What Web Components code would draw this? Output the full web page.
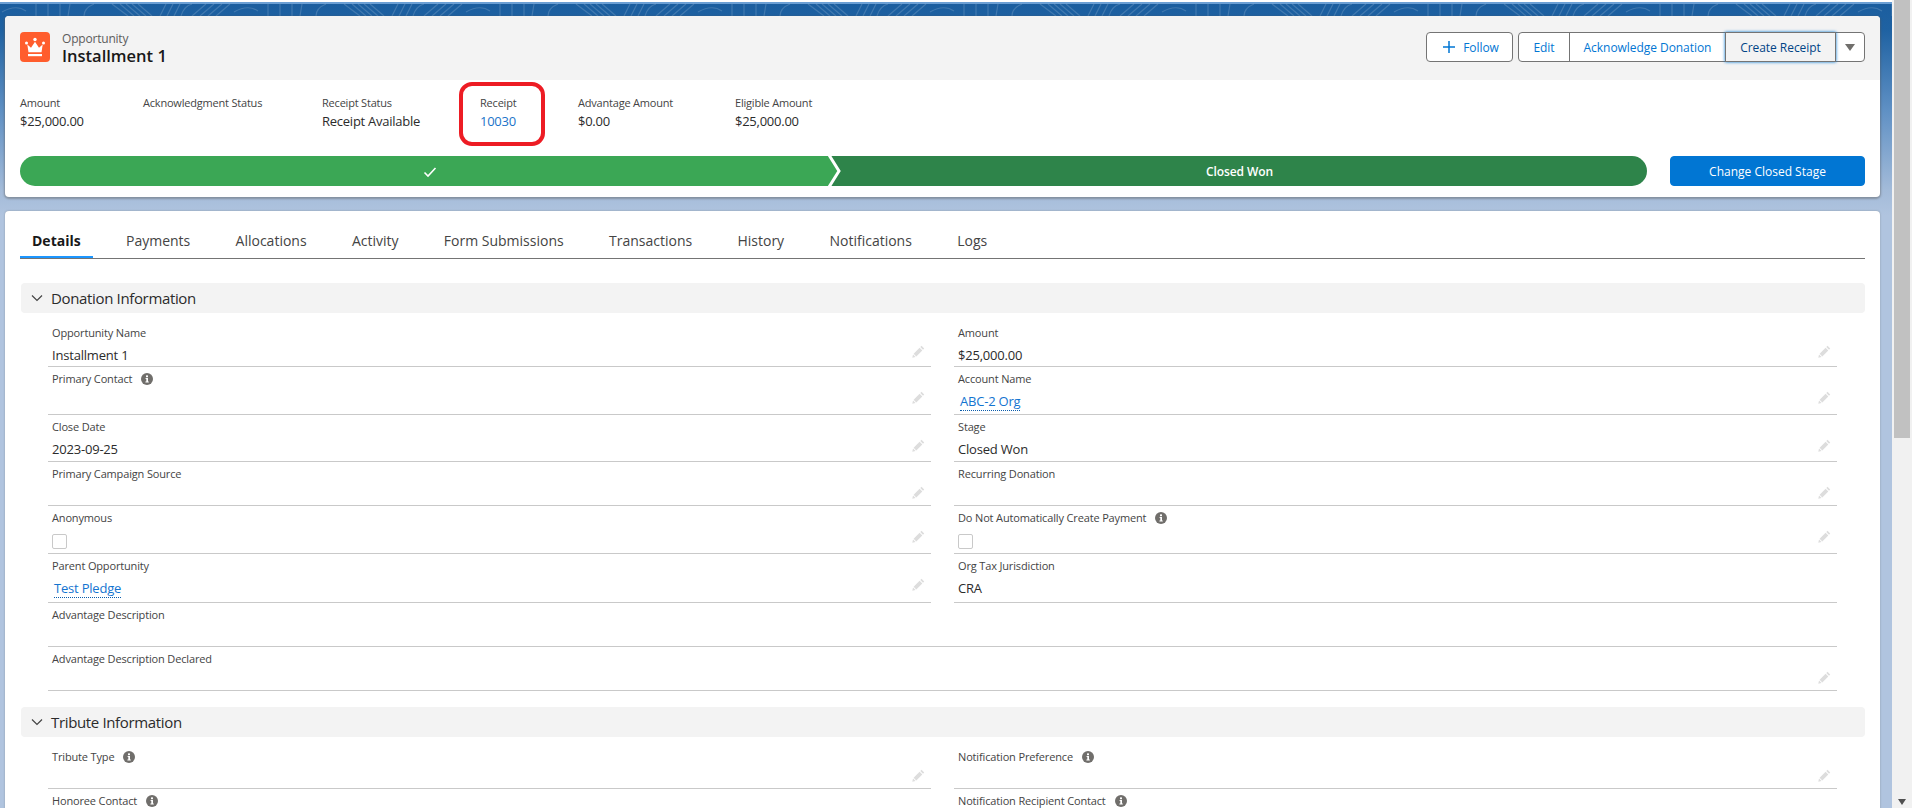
<!DOCTYPE html>
<html lang="en">
<head>
<meta charset="utf-8">
<title>Installment 1</title>
<style>
  html, body { margin: 0; height: 100%; overflow: hidden; }
  body { font-family: "Open Sans", "Noto Sans", "Liberation Sans", sans-serif; color: #181818; }
</style>
</head>
<body>
<page-shell>
  <record-header></record-header>
  <detail-card>
    <tab-bar></tab-bar>
    <form-section title="Donation Information" rows="46px 48px 47px 44px 48px 49px 44px 44px">
      <form-field label="Opportunity Name" value="Installment 1" edit></form-field>
      <form-field label="Amount" value="$25,000.00" edit></form-field>
      <form-field label="Primary Contact" info edit></form-field>
      <form-field label="Account Name" value="ABC-2 Org" link edit></form-field>
      <form-field label="Close Date" value="2023-09-25" edit></form-field>
      <form-field label="Stage" value="Closed Won" edit></form-field>
      <form-field label="Primary Campaign Source" edit></form-field>
      <form-field label="Recurring Donation" edit></form-field>
      <form-field label="Anonymous" checkbox edit></form-field>
      <form-field label="Do Not Automatically Create Payment" info checkbox edit></form-field>
      <form-field label="Parent Opportunity" value="Test Pledge" link edit></form-field>
      <form-field label="Org Tax Jurisdiction" value="CRA"></form-field>
      <form-field label="Advantage Description" wide></form-field>
      <form-field label="Advantage Description Declared" wide edit></form-field>
    </form-section>
    <form-section title="Tribute Information" rows="44px 44px" gap="16">
      <form-field label="Tribute Type" info edit></form-field>
      <form-field label="Notification Preference" info edit></form-field>
      <form-field label="Honoree Contact" info edit></form-field>
      <form-field label="Notification Recipient Contact" info edit></form-field>
    </form-section>
  </detail-card>
</page-shell>

<script>
const infoIcon = `<svg width="12" height="12" viewBox="0 0 12 12"><circle cx="6" cy="6" r="6" fill="#706e6b"/><rect x="5" y="2.400" width="2" height="1.800" fill="#fff"/><path d="M4.600 5h2.400v3.600h.8v.9H4.400v-.9h.9V5.900h-.7z" fill="#fff"/></svg>`;
const pencilIcon = `<svg width="13" height="13" viewBox="0 0 13 13"><path d="M9.500 .8l2.700 2.700-1.200 1.200-2.700-2.700zM7.600 2.700l2.700 2.700-6 6-2.700-2.700zM1 9.400l2.600 2.600-3.300.7z" fill="#dddddd"/></svg>`;

class PageShell extends HTMLElement {
  constructor() {
    super();
    const root = this.attachShadow({ mode: 'open' });
    let marks = '';
    for (let x = -40; x < 1900; x += 232) {
      marks += `<g transform="translate(${x} 0)">
        <path d="M0 16L14 4M8 16L22 4M16 16L30 4M24 16L38 4"/>
        <path d="M42 12Q56 4 66 11M76 4V16M88 4V16M100 4V16M110 4L108 16M124 16Q124 8 134 4"/>
        <path d="M152 4L168 16M160 4L174 16M166 4L180 16M172 4L186 16M178 4L192 16"/>
        <path d="M200 16L206 4M207 16L213 4M214 16L220 4M221 16Q224 6 232 4"/>
      </g>`;
    }
    root.innerHTML = `
<style>
  :host { display: flex; width: 1912px; height: 808px; overflow: hidden; }
  .main {
    position: relative; flex: none; width: 1892px; height: 808px; box-sizing: border-box;
    padding: 16px 12px 0 5px; display: flex; flex-direction: column; gap: 14px;
    background: linear-gradient(#fff 0 2px, #6b9fd4 2px 4px, #1b5e9f 4px, #1f62a2 30px, #5f90c4 110px, #a3bbd9 190px, #b0c4df 215px);
  }
  .contour { position: absolute; left: 0; top: 0; fill: none; stroke: rgba(255,255,255,.16); stroke-width: 1.2; }
  ::slotted(*) { position: relative; }
  .bar { flex: none; width: 20px; height: 808px; background: #f1f1f1; display: flex; flex-direction: column; align-items: center; }
  .thumb { width: 16px; height: 438px; background: #c1c1c1; }
  .arrow { margin-top: auto; margin-bottom: 3px; width: 0; height: 0; border-left: 4px solid transparent; border-right: 4px solid transparent; border-top: 6px solid #505050; }
</style>
<div class="main">
  <svg class="contour" width="1892" height="16">${marks}</svg>
  <slot></slot>
</div>
<div class="bar"><div class="thumb"></div><div class="arrow"></div></div>`;
  }
}

class RecordHeader extends HTMLElement {
  constructor() {
    super();
    const root = this.attachShadow({ mode: 'open' });
    root.innerHTML = `
<style>
  :host { display: block; flex: none; height: 181px; background: #fff; border-radius: 4px; box-shadow: 0 1px 2px 1px rgba(90,90,90,.45); overflow: visible; }
  .head { height: 64px; box-sizing: border-box; background: #f3f3f3; border-radius: 4px 4px 0 0; padding: 16px 15px 0; display: flex; }
  .logo { flex: none; width: 30px; height: 30px; border-radius: 4px; background: #ff5d2d; margin-right: 12px; }
  .logo svg { display: block; }
  .titles { flex: 1; }
  .type { font-size: 12px; line-height: 14px; color: #5c5c5c; letter-spacing: -.2px; }
  .name { font-size: 16.5px; line-height: 20px; font-weight: 600; }
  .actions { display: flex; gap: 5px; height: 30px; align-items: flex-start; font-size: 12px; letter-spacing: -.05px; color: #0176d3; }
  .btn { height: 30px; box-sizing: border-box; border: 1px solid #747474; background: #fff; display: flex; align-items: center; justify-content: center; }
  .follow { width: 87px; border-radius: 4px; gap: 7px; padding-left: 2px; }
  .group { display: flex; }
  .group .btn { margin-left: -1px; }
  .edit { width: 52px; border-radius: 4px 0 0 4px; margin-left: 0 !important; }
  .ack { width: 157px; }
  .create { width: 111px; background: #f3f3f3; color: #014486; box-shadow: 0 0 3px #0176d3; position: relative; }
  .more { width: 30px; border-radius: 0 4px 4px 0; }
  .tri { width: 0; height: 0; border-left: 5px solid transparent; border-right: 5px solid transparent; border-top: 7px solid #706e6b; }
  .facts { height: 76px; box-sizing: border-box; padding: 16px 15px 0; display: grid; grid-template-columns: 123px 179px 158px 98px 157px auto; justify-content: start; }
  .fact { position: relative; }
  .fact b { display: block; font-weight: 400; font-size: 11px; line-height: 14px; letter-spacing: -.2px; color: #444; white-space: nowrap; }
  .fact span { display: block; font-size: 13px; line-height: 18px; letter-spacing: -.25px; margin-top: 2px; color: #2b2b2b; white-space: nowrap; }
  .fact a { color: #1b74c9; }
  .callout { position: absolute; left: -21px; top: -14px; width: 86px; height: 64px; box-sizing: border-box; border: 4px solid #ed1c24; border-radius: 13px; }
  .path-row { padding: 0 15px; display: flex; gap: 23px; height: 30px; }
  .path { flex: 1; display: flex; position: relative; border-radius: 15px; overflow: hidden; color: #fff; font-size: 12px; font-weight: 600; letter-spacing: -.1px; }
  .stage { display: flex; align-items: center; justify-content: center; padding-top: 1px; }
  .done { flex: 0 0 812px; background: #3ba755; }
  .done svg { margin-left: 7px; }
  .current { flex: 1; background: #2e844a; }
  .chev { position: absolute; left: 806px; top: 0; }
  .change { flex: none; width: 195px; height: 30px; box-sizing: border-box; border: 1px solid #0176d3; border-radius: 4px; background: #0176d3; color: #fff; font-size: 12px; display: flex; align-items: center; justify-content: center; }
</style>
<div class="head">
  <div class="logo"><svg width="30" height="30" viewBox="0 0 30 30" fill="#fff">
    <circle cx="15" cy="7.500" r="1.700"/><circle cx="6.500" cy="11" r="1.500"/><circle cx="23.500" cy="11" r="1.500"/>
    <path d="M7.300 12.500L11 15.800 15 9.800 19 15.800 22.700 12.500 21.500 20.200H8.500z"/><rect x="8" y="22" width="14" height="2.200"/>
  </svg></div>
  <div class="titles"><div class="type">Opportunity</div><div class="name">Installment 1</div></div>
  <div class="actions">
    <div class="btn follow"><svg width="14" height="14" viewBox="0 0 14 14"><path d="M7 1v12M1 7h12" stroke="#0176d3" stroke-width="1.500" fill="none"/></svg>Follow</div>
    <div class="group">
      <div class="btn edit">Edit</div>
      <div class="btn ack">Acknowledge Donation</div>
      <div class="btn create">Create Receipt</div>
      <div class="btn more"><div class="tri"></div></div>
    </div>
  </div>
</div>
<div class="facts">
  <div class="fact"><b>Amount</b><span>$25,000.00</span></div>
  <div class="fact"><b>Acknowledgment Status</b></div>
  <div class="fact"><b>Receipt Status</b><span>Receipt Available</span></div>
  <div class="fact"><b>Receipt</b><span><a>10030</a></span><div class="callout"></div></div>
  <div class="fact"><b>Advantage Amount</b><span>$0.00</span></div>
  <div class="fact"><b>Eligible Amount</b><span>$25,000.00</span></div>
</div>
<div class="path-row">
  <div class="path">
    <div class="stage done"><svg width="14" height="12" viewBox="0 0 14 12"><path d="M1.500 6.500l3.500 3.500 7.500-8" stroke="#fff" stroke-width="1.600" fill="none"/></svg></div>
    <div class="stage current">Closed Won</div>
    <svg class="chev" width="18" height="30" viewBox="0 0 18 30"><path d="M0 0H3L13 15 3 30H0z" fill="#3ba755"/><path d="M3 -1L13 15 3 31" stroke="#fff" stroke-width="3" fill="none"/></svg>
  </div>
  <div class="change">Change Closed Stage</div>
</div>`;
  }
}

class DetailCard extends HTMLElement {
  constructor() {
    super();
    const root = this.attachShadow({ mode: 'open' });
    root.innerHTML = `
<style>
  :host { display: block; flex: 1; background: #fff; border-radius: 4px 4px 0 0; box-sizing: border-box; padding: 0 15px; box-shadow: 0 0 2px rgba(90,90,90,.45); }
</style>
<slot></slot>`;
  }
}

class TabBar extends HTMLElement {
  constructor() {
    super();
    const root = this.attachShadow({ mode: 'open' });
    const names = ['Details', 'Payments', 'Allocations', 'Activity', 'Form Submissions', 'Transactions', 'History', 'Notifications', 'Logs'];
    root.innerHTML = `
<style>
  :host { display: flex; gap: 21.3px; height: 48px; box-sizing: border-box; padding-top: 16px; border-bottom: 1px solid #747474; font-size: 14px; color: #444; }
  .tab { padding: 0 12px; line-height: 28px; height: 31px; box-sizing: border-box; white-space: nowrap; }
  .on { color: #181818; font-weight: 700; border-bottom: 2px solid #1b96ff; padding: 0 12px; }
</style>
${names.map((n, i) => `<div class="tab${i === 0 ? ' on' : ''}">${n}</div>`).join('')}`;
  }
}

class FormSection extends HTMLElement {
  constructor() {
    super();
    const root = this.attachShadow({ mode: 'open' });
    const top = this.getAttribute('gap') || '24';
    root.innerHTML = `
<style>
  :host { display: block; margin-top: ${top}px; }
  .head { margin-left: 1px; height: 30px; background: #f3f3f3; border-radius: 4px; display: flex; align-items: center; padding-left: 10px; gap: 8px; font-size: 15px; letter-spacing: -.35px; color: #2b2b2b; }
  .grid { display: grid; grid-template-columns: 883px 883px; column-gap: 23px; margin: 8px 0 0 28px; grid-template-rows: ${this.getAttribute('rows')}; }
</style>
<div class="head"><svg width="12" height="12" viewBox="0 0 12 12"><path d="M1 3.500L6 8.500 11 3.500" stroke="#444" stroke-width="1.200" fill="none"/></svg>${this.getAttribute('title')}</div>
<div class="grid"><slot></slot></div>`;
    this.removeAttribute('title');
  }
}

class FormField extends HTMLElement {
  constructor() {
    super();
    const root = this.attachShadow({ mode: 'open' });
    const value = this.getAttribute('value');
    let body = '';
    if (this.hasAttribute('checkbox')) body = '<div class="check"></div>';
    else if (value && this.hasAttribute('link')) body = `<div class="value"><a>${value}</a></div>`;
    else if (value) body = `<div class="value">${value}</div>`;
    root.innerHTML = `
<style>
  :host { display: block; position: relative; box-sizing: border-box; border-bottom: 1px solid #c9c9c9; padding: 5px 4px 0; ${this.hasAttribute('wide') ? 'grid-column: 1 / 3;' : ''} }
  .label { display: flex; align-items: center; gap: 9px; font-size: 11px; line-height: 14px; letter-spacing: -.15px; color: #444; white-space: nowrap; }
  .label svg { display: block; }
  .value { font-size: 13px; line-height: 18px; letter-spacing: -.2px; margin-top: 6px; color: #2b2b2b; white-space: nowrap; }
  a { display: inline-block; margin-left: 2px; color: #1374d0; line-height: 17px; border-bottom: 1px dotted #0b5cab; }
  .check { width: 15px; height: 15px; box-sizing: border-box; border: 1px solid #c9c9c9; border-radius: 2px; background: #fff; margin-top: 9px; }
  .pencil { position: absolute; right: 6px; top: 24px; }
  .pencil svg { display: block; }
</style>
<div class="label">${this.getAttribute('label')}${this.hasAttribute('info') ? infoIcon : ''}</div>
${body}
${this.hasAttribute('edit') ? `<div class="pencil">${pencilIcon}</div>` : ''}`;
  }
}

customElements.define('page-shell', PageShell);
customElements.define('record-header', RecordHeader);
customElements.define('detail-card', DetailCard);
customElements.define('tab-bar', TabBar);
customElements.define('form-section', FormSection);
customElements.define('form-field', FormField);
</script>
</body>
</html>
